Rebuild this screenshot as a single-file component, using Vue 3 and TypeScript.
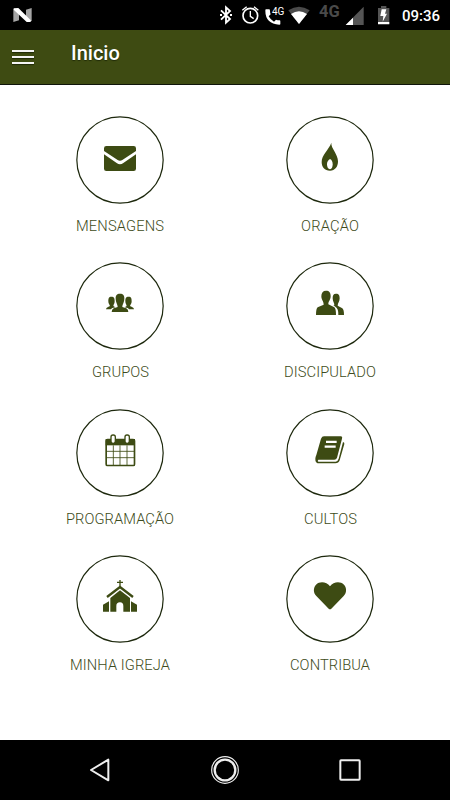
<script setup lang="ts">
interface MenuItem {
  id: string
  label: string
  width: number
}

const items: MenuItem[] = [
  { id: 'mail', label: 'MENSAGENS', width: 88 },
  { id: 'flame', label: 'ORAÇÃO', width: 58 },
  { id: 'groups', label: 'GRUPOS', width: 57 },
  { id: 'pair', label: 'DISCIPULADO', width: 92 },
  { id: 'calendar', label: 'PROGRAMAÇÃO', width: 108 },
  { id: 'book', label: 'CULTOS', width: 53 },
  { id: 'church', label: 'MINHA IGREJA', width: 100 },
  { id: 'heart', label: 'CONTRIBUA', width: 80 },
]
</script>

<template>
  <div class="screen">
    <header class="status">
      <svg class="android" viewBox="0 0 120 90">
        <path fill="#a5a5a5" d="M40 27 57 39V61L40 66ZM78 29 95 24V64L78 52Z" />
        <path fill="#fff" d="M41 25 55 24 94 62 91 66H80L41 29Z" />
      </svg>
      <div class="status-right">
        <svg width="30" height="30" viewBox="0 0 90 90" fill="none" stroke="#fff" stroke-width="5.5">
          <path d="M33 31 60 57 48 68V22L60 33 33 59" />
          <path d="M30 45h6M60 45h6" stroke-width="6" />
        </svg>
        <svg width="24" height="30" viewBox="90 0 72 90" fill="none" stroke="#fff" stroke-width="5">
          <circle cx="121" cy="47" r="22" />
          <path d="M97 31 110 20M132 20 145 31M121 33V49L131 56" stroke-width="4" />
        </svg>
        <div class="call">
          <svg width="24" height="30" viewBox="162 0 72 90">
            <path fill="#fff" d="M168 28h9q3 0 3 4 0 6 2 11l-6 6q6 11 16 16l6-6q5 2 11 2 2 0 2 3v8q0 2-3 2-42-3-42-42 0-4 2-4Z" />
          </svg>
          <span>4G</span>
        </div>
        <svg width="24" height="30" viewBox="234 0 72 90">
          <path fill="#4a4a4a" d="M235 31Q267 9 299 31L267 72Z" />
          <path fill="#fff" d="M243 42Q267 25 291 42L267 72Z" />
        </svg>
        <span class="net">4G</span>
        <svg width="24" height="30" viewBox="102 0 72 90">
          <path fill="#555" d="M107 75 161 20V75Z" />
          <path fill="#fff" d="M107 75 129 53V75Z" />
        </svg>
        <svg class="battery" width="24" height="30" viewBox="186 0 72 90">
          <path fill="#555" d="M204 24h9v-6h16v6h9v42h-34Z" />
          <path fill="#fff" d="M204 66h34v7h-34ZM215 28h14l-4 13h6L218 65l2-17h-9Z" />
        </svg>
        <time>09:36</time>
      </div>
    </header>

    <div class="toolbar">
      <button class="menu" aria-label="Menu"><i></i><i></i><i></i></button>
      <h1>Inicio</h1>
    </div>

    <main class="grid">
      <div v-for="item in items" :key="item.id" class="cell">
        <svg class="badge" viewBox="48 18 264 264">
          <circle cx="180" cy="150" r="129.500" fill="#fff" stroke="#1d280d" stroke-width="3.6" />
          <g v-if="item.id === 'mail'" fill="#3d4b13">
            <path d="M139 108H221Q228 108 228 115V123L187 150Q180 155 173 150L132 123V115Q132 108 139 108Z" />
            <path d="M132 133 170 159Q180 167 190 159L228 133V176Q228 183 221 183H139Q132 183 132 176Z" />
          </g>
          <g v-else-if="item.id === 'flame'">
            <path fill="#3d4b13" d="M184 98C182 114 204 132 204 154C204 171 195 182 180 182C164 182 155 171 155 156C155 134 176 120 184 98Z" />
            <path fill="#fff" d="M180 147Q188 151 188 163Q188 177 180 178Q171 177 171 163Q171 152 180 147Z" />
          </g>
          <g v-else-if="item.id === 'groups'" fill="#3d4b13">
            <path d="M154 122C163 122 164 128 164 136C164 143 161 145 160 150L166 154Q154 156 153 160H138Q138 155 144 153L150 150C148 145 145 143 145 136C145 128 146 122 154 122Z" />
            <path d="M206 122C197 122 196 128 196 136C196 143 199 145 200 150L194 154Q206 156 207 160H222Q222 155 216 153L210 150C212 145 215 143 215 136C215 128 214 122 206 122Z" />
            <path d="M180 113C190 113 193 119 193 127C193 140 187 145 187 153L199 157Q205 160 205 168H155Q155 160 161 157L173 153C173 145 167 140 167 127C167 119 170 113 180 113Z" />
          </g>
          <g v-else-if="item.id === 'pair'" fill="#3d4b13">
            <path d="M168 104C178 104 182 110 182 121C182 132 175 135 175 145L193 154Q198 158 198 177H138Q138 158 143 154L161 146C161 135 154 132 154 121C154 110 159 104 168 104Z" />
            <path d="M198 113C207 113 209 119 209 127C209 137 203 141 203 149L217 157Q222 161 222 177H205Q206 158 196 152L190 148H193C194 141 188 137 188 127C188 119 190 113 198 113Z" />
          </g>
          <g v-else-if="item.id === 'calendar'" transform="translate(0 -2)">
            <rect x="138.500" y="111.500" width="85" height="78" rx="4" fill="#fff" stroke="#3d4b13" stroke-width="5" />
            <path fill="#3d4b13" d="M137 110H225V129H137Z" />
            <path d="M160 129V188M180 129V188M201 129V188M140 147H223M140 166H223" stroke="#3d4b13" stroke-width="2.500" />
            <rect x="153" y="98" width="13" height="25" rx="6" fill="#fff" stroke="#3d4b13" stroke-width="4" />
            <rect x="195" y="98" width="13" height="25" rx="6" fill="#fff" stroke="#3d4b13" stroke-width="4" />
          </g>
          <g v-else-if="item.id === 'book'" transform="translate(0 -2)">
            <path fill="#3d4b13" d="M162 102H212Q218 102 216 109L201 166Q199 172 193 172H145Q140 178 149 178H197Q203 178 206 169L219 119Q224 120 223 125L209 174Q206 183 196 183H148Q135 183 136 169Q136 164 139 158L153 109Q156 102 162 102Z" />
            <path d="M168 118.500H200M164 133H197" stroke="#fff" stroke-width="6.500" />
          </g>
          <g v-else-if="item.id === 'church'" transform="translate(0 3)">
            <path fill="none" stroke="#3d4b13" stroke-width="4" d="M180 90V110M171 97H189" />
            <path fill="none" stroke="#3d4b13" stroke-width="7" d="M141 141 180 111 219 141" />
            <path fill="#3d4b13" d="M151 144 180 121 210 144V185H190V168Q190 157 180 157Q169 157 169 168V185H151ZM129 164 147 154V185H129ZM213 154 231 164V185H213Z" />
          </g>
          <path v-else transform="translate(0 3)" fill="#3d4b13" d="M180 109C170 96 151 92 138 104C129 114 130 129 139 138L176 176Q180 180 184 176L221 138C230 129 231 114 222 104C209 92 190 96 180 109Z" />
        </svg>
        <svg class="label" height="22" :width="item.width" :viewBox="`0 0 ${item.width} 22`">
          <text x="0" y="16.4" :textLength="item.width" lengthAdjust="spacing">{{ item.label }}</text>
        </svg>
      </div>
    </main>

    <nav class="navbar">
      <svg viewBox="0 0 90 90" width="30" height="30"><path fill="none" stroke="#eee" stroke-width="6" stroke-linejoin="round" d="M18 45 70 14V76Z" /></svg>
      <svg viewBox="0 0 90 90" width="30" height="30" fill="none" stroke="#eee"><circle cx="45" cy="45" r="40" stroke-width="3.500" /><circle cx="45" cy="45" r="31" stroke-width="7" /></svg>
      <svg viewBox="0 0 90 90" width="30" height="30"><rect x="16" y="16" width="58" height="58" rx="2" fill="none" stroke="#eee" stroke-width="6" /></svg>
    </nav>
  </div>
</template>

<style>
body {
  margin: 0;
}
</style>

<style scoped>
.screen {
  display: flex;
  flex-direction: column;
  width: 450px;
  height: 800px;
  overflow: hidden;
  background: #fff;
  font-family: Roboto, "Liberation Sans", sans-serif;
}
.status {
  display: flex;
  justify-content: space-between;
  height: 30px;
  background: #000;
  color: #fff;
}
.android {
  width: 40px;
  height: 30px;
}
.status-right {
  display: flex;
  width: 240px;
}
.status-right svg {
  flex: none;
}
.call {
  display: flex;
  width: 24px;
}
.call span {
  flex: none;
  margin: 5px 0 0 -16px;
  font-size: 10px;
  line-height: 13px;
}
.net {
  width: 26px;
  padding-left: 7px;
  margin-right: -1px;
  color: #4a4a4a;
  font-size: 16.5px;
  font-weight: 700;
  line-height: 23px;
}
.battery {
  margin-left: 4px;
}
time {
  margin-left: 6px;
  font-size: 15px;
  font-weight: 500;
  line-height: 32px;
}
.toolbar {
  display: flex;
  box-sizing: border-box;
  height: 55px;
  border-bottom: 1px solid #10150a;
  background: #3e4b12;
}
.menu {
  display: flex;
  flex-direction: column;
  gap: 4px;
  width: 22px;
  margin: 20px 0 0 12px;
  padding: 0;
  border: 0;
  background: none;
}
.menu i {
  width: 22px;
  height: 2px;
  background: #f4f4f4;
  box-shadow: 0 1px 1px #202b08;
}
h1 {
  margin: 11px 0 0 37px;
  color: #fff;
  font-size: 20px;
  font-weight: 500;
  line-height: 24px;
  text-shadow: 0 1px 1px #202b08;
}
.grid {
  display: grid;
  flex: 1;
  grid-template-columns: 210px 210px;
  grid-auto-rows: 146.3px;
  align-content: start;
  padding: 31px 15px 0;
}
.cell {
  display: flex;
  flex-direction: column;
  align-items: center;
}
.badge {
  flex: none;
  width: 88px;
  height: 88px;
}
.label {
  flex: none;
  margin-top: 11px;
  overflow: visible;
}
.label text {
  fill: #3d4b20;
  font-size: 14.7px;
  font-weight: 300;
}
.navbar {
  display: flex;
  align-items: center;
  justify-content: space-between;
  box-sizing: border-box;
  height: 60px;
  padding: 0 85px;
  background: #000;
}
</style>
